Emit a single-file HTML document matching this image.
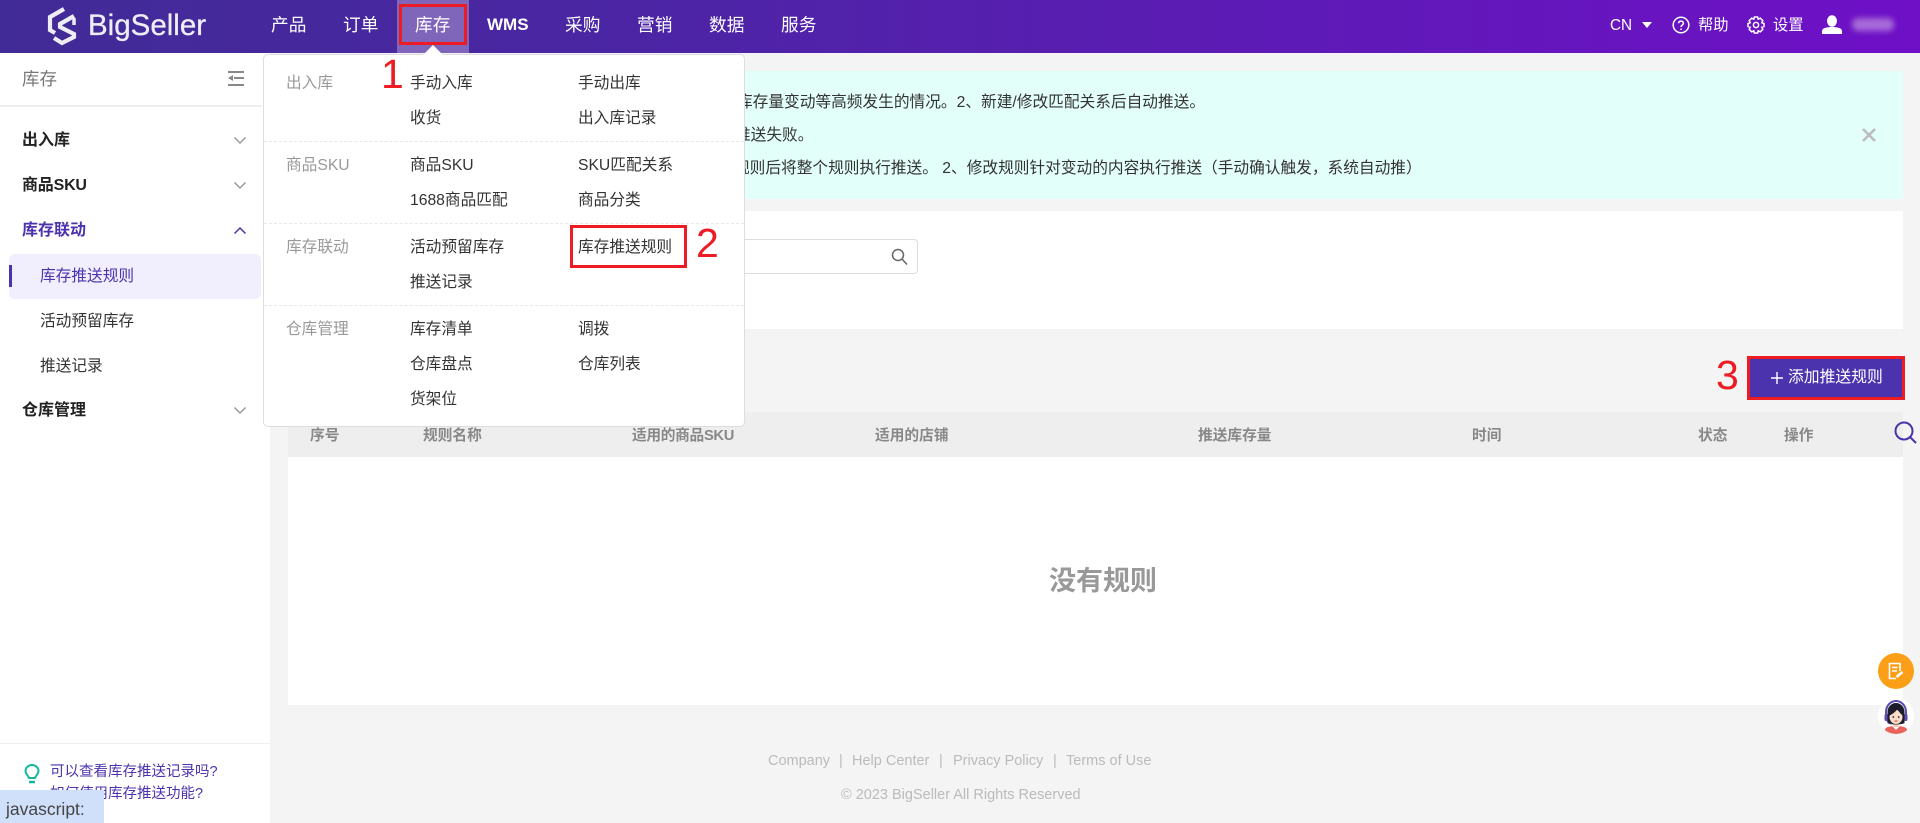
<!DOCTYPE html>
<html lang="zh"><head><meta charset="utf-8"><title>BigSeller</title>
<style>
html,body{margin:0;padding:0}
body{width:1920px;height:823px;overflow:hidden;position:relative;background:#f4f4f4;font-family:"Liberation Sans","Noto Sans CJK SC",sans-serif;color:#333;font-size:15.7px}
div,span.a,svg{position:absolute}
.t{position:absolute;line-height:20px;white-space:nowrap}
.n{color:#fff;font-size:17.7px;top:15px}
.h{color:#fff;font-size:15.3px;top:16px}
.g{color:#999;left:286px}
.b{font-weight:700;color:#222;font-size:16px;left:23px}
.th{font-weight:700;color:#888;font-size:14.7px;top:426px}
.f{color:#bbb;font-size:14.5px}
.r{color:#ed1c24;font-size:41px;line-height:44px;z-index:9;white-space:nowrap}
.rb{border:3px solid #ed1c24;box-sizing:border-box;z-index:8}
</style></head><body>

<!-- header -->
<div style="left:0;top:0;width:1920px;height:53px;background:linear-gradient(90deg,#412b96 0%,#4a26a3 30%,#6f10c7 100%)"></div>
<svg style="left:40px;top:0" width="50" height="53" viewBox="0 0 50 53" fill="none" stroke="#eeedf6" stroke-width="4.200" stroke-linejoin="miter"><path d="M24 9L10 17V30L15 33"/><path d="M34 16L20 24V27L34 34V37L22 43L14 38"/><path d="M34 18V25" stroke-width="3.500"/></svg>
<span class="t" style="left:88px;top:14px;font-size:29.5px;line-height:24px;color:#eeedf6;-webkit-text-stroke:.3px #eeedf6">BigSeller</span>
<div style="left:397px;top:0;width:72px;height:53px;background:#8066ba"></div>
<div class="rb" style="left:399px;top:4px;width:68px;height:41px"></div>
<span class="t n" style="left:271px">产品</span>
<span class="t n" style="left:343px">订单</span>
<span class="t n" style="left:415px">库存</span>
<span class="t n" style="left:487px;font-weight:700;font-size:17px">WMS</span>
<span class="t n" style="left:565px">采购</span>
<span class="t n" style="left:637px">营销</span>
<span class="t n" style="left:709px">数据</span>
<span class="t n" style="left:781px">服务</span>
<span class="t h" style="left:1610px">CN</span>
<svg style="left:1642px;top:22px" width="10" height="7"><path d="M0 0H10L5 6Z" fill="#fff"/></svg>
<svg style="left:1672px;top:16px" width="18" height="18" viewBox="0 0 18 18" fill="none" stroke="#fff" stroke-width="1.5"><circle cx="9" cy="9" r="7.8"/><path d="M6.6 7.2C6.6 4.4 11.4 4.4 11.4 7.2 11.4 9 9 9 9 11"/><path d="M9 12.5V14"/></svg>
<span class="t h" style="left:1698px">帮助</span>
<svg style="left:1747px;top:16px" width="18" height="18" viewBox="0 0 18 18" fill="none" stroke="#fff" stroke-width="1.5"><path d="M7.4 1H10.6L11.2 3.2 13.3 2.2 15.8 4.7 14.8 6.8 17 7.4V10.6L14.8 11.2 15.8 13.3 13.3 15.8 11.2 14.8 10.6 17H7.4L6.8 14.8 4.7 15.8 2.2 13.3 3.2 11.2 1 10.6V7.4L3.2 6.8 2.2 4.7 4.7 2.2 6.8 3.2Z"/><circle cx="9" cy="9" r="2.6"/></svg>
<span class="t h" style="left:1773px">设置</span>
<svg style="left:1822px;top:15px" width="20" height="19" viewBox="0 0 20 19" fill="#fff"><ellipse cx="10" cy="6" rx="5" ry="5.8"/><path d="M0 19V16C0 13 5 12 10 12S20 13 20 16V19Z"/></svg>
<div style="left:1852px;top:18px;width:42px;height:13px;background:#a76ad8;border-radius:6px;filter:blur(3px)"></div>

<!-- sidebar -->
<div style="left:0;top:53px;width:270px;height:770px;background:#fff"></div>
<span class="t" style="left:22px;top:69px;font-size:17.5px;color:#777">库存</span>
<svg style="left:228px;top:71px" width="17" height="15" fill="#888"><rect y="0" width="16" height="2"/><rect x="6" y="6" width="10" height="2"/><rect y="13" width="16" height="2"/><path d="M5 4V10L0 7Z"/></svg>
<div style="left:0;top:105px;width:262px;height:2px;background:#eee"></div>
<span class="t b" style="top:131px;left:22px">出入库</span>
<span class="t b" style="top:176px;left:22px;letter-spacing:-.2px">商品SKU</span>
<span class="t b" style="top:221px;left:22px;color:#4b33ad">库存联动</span>
<svg style="left:233px;top:136px" width="14" height="9" fill="none" stroke="#999" stroke-width="1.5"><path d="M1.5 1.5L7 7 12.5 1.5"/></svg>
<svg style="left:233px;top:181px" width="14" height="9" fill="none" stroke="#999" stroke-width="1.5"><path d="M1.5 1.5L7 7 12.5 1.5"/></svg>
<svg style="left:233px;top:226px" width="14" height="9" fill="none" stroke="#4b33ad" stroke-width="1.5"><path d="M1.5 7.5L7 2 12.5 7.5"/></svg>
<svg style="left:233px;top:406px" width="14" height="9" fill="none" stroke="#999" stroke-width="1.5"><path d="M1.5 1.5L7 7 12.5 1.5"/></svg>
<div style="left:9px;top:254px;width:252px;height:45px;background:#f1eefd;border-radius:6px"></div>
<div style="left:9px;top:265px;width:3px;height:22px;background:#4b33ad"></div>
<span class="t" style="left:40px;top:267px;color:#4b33ad">库存推送规则</span>
<span class="t" style="left:40px;top:312px">活动预留库存</span>
<span class="t" style="left:40px;top:357px">推送记录</span>
<span class="t b" style="top:401px;left:22px">仓库管理</span>
<div style="left:0;top:743px;width:270px;height:1px;background:#eee"></div>
<svg style="left:24px;top:764px" width="16" height="20" viewBox="0 0 16 20" fill="none" stroke="#14b8a0" stroke-width="2"><path d="M5 14C4 11 1.5 10 1.5 7A6.5 6 0 0 1 14.500 7C14.500 10 12 11 11 14Z"/><path d="M5 18H11" stroke-width="2.500"/></svg>
<span class="t" style="left:50px;top:762px;color:#4b33ad;font-size:14.500px">可以查看库存推送记录吗?</span>
<span class="t" style="left:50px;top:784px;color:#4b33ad;font-size:14.500px">如何使用库存推送功能?</span>
<div style="left:0;top:790px;width:104px;height:33px;background:#d0e0fb;z-index:5"></div>
<span class="t" style="left:6px;top:799px;font-size:17.500px;color:#444;z-index:6">javascript:</span>

<!-- alert -->
<div style="left:288px;top:71px;width:1615px;height:128px;background:#e3fff9"></div>
<span class="t" style="left:737px;top:93px;font-size:15.700px">库存量变动等高频发生的情况。2、新建/修改匹配关系后自动推送。</span>
<span class="t" style="left:735px;top:126px;font-size:15.700px">推送失败。</span>
<span class="t" style="left:734px;top:159px;font-size:15.700px">规则后将整个规则执行推送。 2、修改规则针对变动的内容执行推送（手动确认触发，系统自动推）</span>
<svg style="left:1862px;top:128px" width="14" height="14" fill="none" stroke="#bbb" stroke-width="2.500"><path d="M1 1L13 13M13 1L1 13"/></svg>

<!-- filter card -->
<div style="left:288px;top:211px;width:1615px;height:118px;background:#fff"></div>
<div style="left:600px;top:239px;width:318px;height:35px;border:1px solid #ddd;border-radius:4px;box-sizing:border-box"></div>
<svg style="left:891px;top:248px" width="17" height="18" fill="none" stroke="#666" stroke-width="1.500"><circle cx="7" cy="7" r="5.500"/><path d="M11 11L16 16.500"/></svg>

<!-- add button -->
<div class="rb" style="left:1747px;top:356px;width:158px;height:44px"></div>
<div style="left:1750px;top:359px;width:152px;height:38px;background:#4b33ad"></div>
<svg style="left:1771px;top:372px" width="12" height="12"><path d="M6 0V12M0 6H12" stroke="#fff" stroke-width="1.400"/></svg>
<span class="t" style="left:1788px;top:368px;color:#fff;font-size:15.800px">添加推送规则</span>

<!-- table -->
<div style="left:288px;top:412px;width:1615px;height:45px;background:#eee"></div>
<div style="left:288px;top:457px;width:1615px;height:248px;background:#fff"></div>
<span class="t th" style="left:310px">序号</span>
<span class="t th" style="left:423px">规则名称</span>
<span class="t th" style="left:632px;letter-spacing:-.3px">适用的商品SKU</span>
<span class="t th" style="left:875px">适用的店铺</span>
<span class="t th" style="left:1198px">推送库存量</span>
<span class="t th" style="left:1472px">时间</span>
<span class="t th" style="left:1698px">状态</span>
<span class="t th" style="left:1784px">操作</span>
<svg style="left:1894px;top:421px" width="24" height="24" fill="none" stroke="#4b33ad" stroke-width="2"><circle cx="10" cy="10" r="8.500"/><path d="M16 16L22 22"/></svg>
<span class="t" style="left:1049px;top:565px;font-size:27px;line-height:32px;font-weight:700;color:#999">没有规则</span>

<!-- footer -->
<span class="t f" style="left:768px;top:751px">Company</span>
<span class="t f" style="left:839px;top:751px">|</span>
<span class="t f" style="left:852px;top:751px">Help Center</span>
<span class="t f" style="left:939px;top:751px">|</span>
<span class="t f" style="left:953px;top:751px">Privacy Policy</span>
<span class="t f" style="left:1053px;top:751px">|</span>
<span class="t f" style="left:1066px;top:751px">Terms of Use</span>
<span class="t f" style="left:841px;top:785px">© 2023 BigSeller All Rights Reserved</span>

<!-- float buttons -->
<div style="left:1878px;top:653px;width:36px;height:36px;border-radius:50%;background:#fa9f17"></div>
<svg style="left:1888px;top:662px" width="16" height="18" fill="none" stroke="#fff" stroke-width="1.600"><path d="M12 9V1.500H1.500V16.500H8"/><path d="M4 5.500H9.500M4 9H9"/><path d="M8.500 15L14.500 10" stroke-width="2.500"/></svg>
<div style="left:1878px;top:698px;width:36px;height:36px;border-radius:50%;background:#fff;overflow:hidden">
<svg style="left:0;top:0" width="36" height="36" viewBox="0 0 36 36"><path d="M7 36V32C7 29 12 28 18 28S29 29 29 32V36Z" fill="#e9635a"/><path d="M14 28H22L18 32Z" fill="#fff"/><rect x="15.500" y="23" width="5" height="6" fill="#f6cdb4"/><path d="M8 19V14A10 11 0 0 1 28 14V19" fill="none" stroke="#5a4bb0" stroke-width="2"/><rect x="6.500" y="16" width="3.500" height="7" rx="1.500" fill="#5a4bb0"/><rect x="26" y="16" width="3.500" height="7" rx="1.500" fill="#5a4bb0"/><path d="M9.500 25V14A8.500 9 0 0 1 26.500 14V25C24 27 12 27 9.500 25Z" fill="#1c1c2a"/><ellipse cx="18" cy="19" rx="6.500" ry="7" fill="#fbdcc8"/><path d="M11 18C14 16 18 14 19 11 21 14 23 16 25 18V10H11Z" fill="#1c1c2a"/><circle cx="15.300" cy="19" r=".9" fill="#222"/><circle cx="20.700" cy="19" r=".9" fill="#222"/><path d="M16.500 23H19.500" stroke="#d44" stroke-width="1"/><path d="M9 23C10 26 12 26 14 26" fill="none" stroke="#5a4bb0" stroke-width=".8"/></svg></div>

<!-- dropdown -->
<div style="left:263px;top:54px;width:482px;height:373px;background:#fff;border:1px solid #ddd;box-sizing:border-box;border-radius:5px;z-index:3"></div>
<svg style="left:423px;top:45px;z-index:4" width="20" height="10"><path d="M0 10L10 0 20 10Z" fill="#fff"/></svg>
<div style="z-index:4;left:0;top:0;width:1920px;height:823px;pointer-events:none">
<div style="left:264px;top:141px;width:480px;border-top:1px dashed #e8e8e8"></div>
<div style="left:264px;top:223px;width:480px;border-top:1px dashed #e8e8e8"></div>
<div style="left:264px;top:305px;width:480px;border-top:1px dashed #e8e8e8"></div>
<span class="t g" style="top:74px">出入库</span>
<span class="t g" style="top:156px">商品SKU</span>
<span class="t g" style="top:238px">库存联动</span>
<span class="t g" style="top:320px">仓库管理</span>
<span class="t" style="left:410px;top:74px">手动入库</span>
<span class="t" style="left:578px;top:74px">手动出库</span>
<span class="t" style="left:410px;top:109px">收货</span>
<span class="t" style="left:578px;top:109px">出入库记录</span>
<span class="t" style="left:410px;top:156px">商品SKU</span>
<span class="t" style="left:578px;top:156px">SKU匹配关系</span>
<span class="t" style="left:410px;top:191px">1688商品匹配</span>
<span class="t" style="left:578px;top:191px">商品分类</span>
<span class="t" style="left:410px;top:238px">活动预留库存</span>
<span class="t" style="left:578px;top:238px">库存推送规则</span>
<span class="t" style="left:410px;top:273px">推送记录</span>
<span class="t" style="left:410px;top:320px">库存清单</span>
<span class="t" style="left:578px;top:320px">调拨</span>
<span class="t" style="left:410px;top:355px">仓库盘点</span>
<span class="t" style="left:578px;top:355px">仓库列表</span>
<span class="t" style="left:410px;top:390px">货架位</span>
</div>
<div class="rb" style="left:570px;top:225px;width:117px;height:43px"></div>
<span class="t r" style="left:381px;top:52px">1</span>
<span class="t r" style="left:696px;top:221px">2</span>
<span class="t r" style="left:1716px;top:353px">3</span>
</body></html>
